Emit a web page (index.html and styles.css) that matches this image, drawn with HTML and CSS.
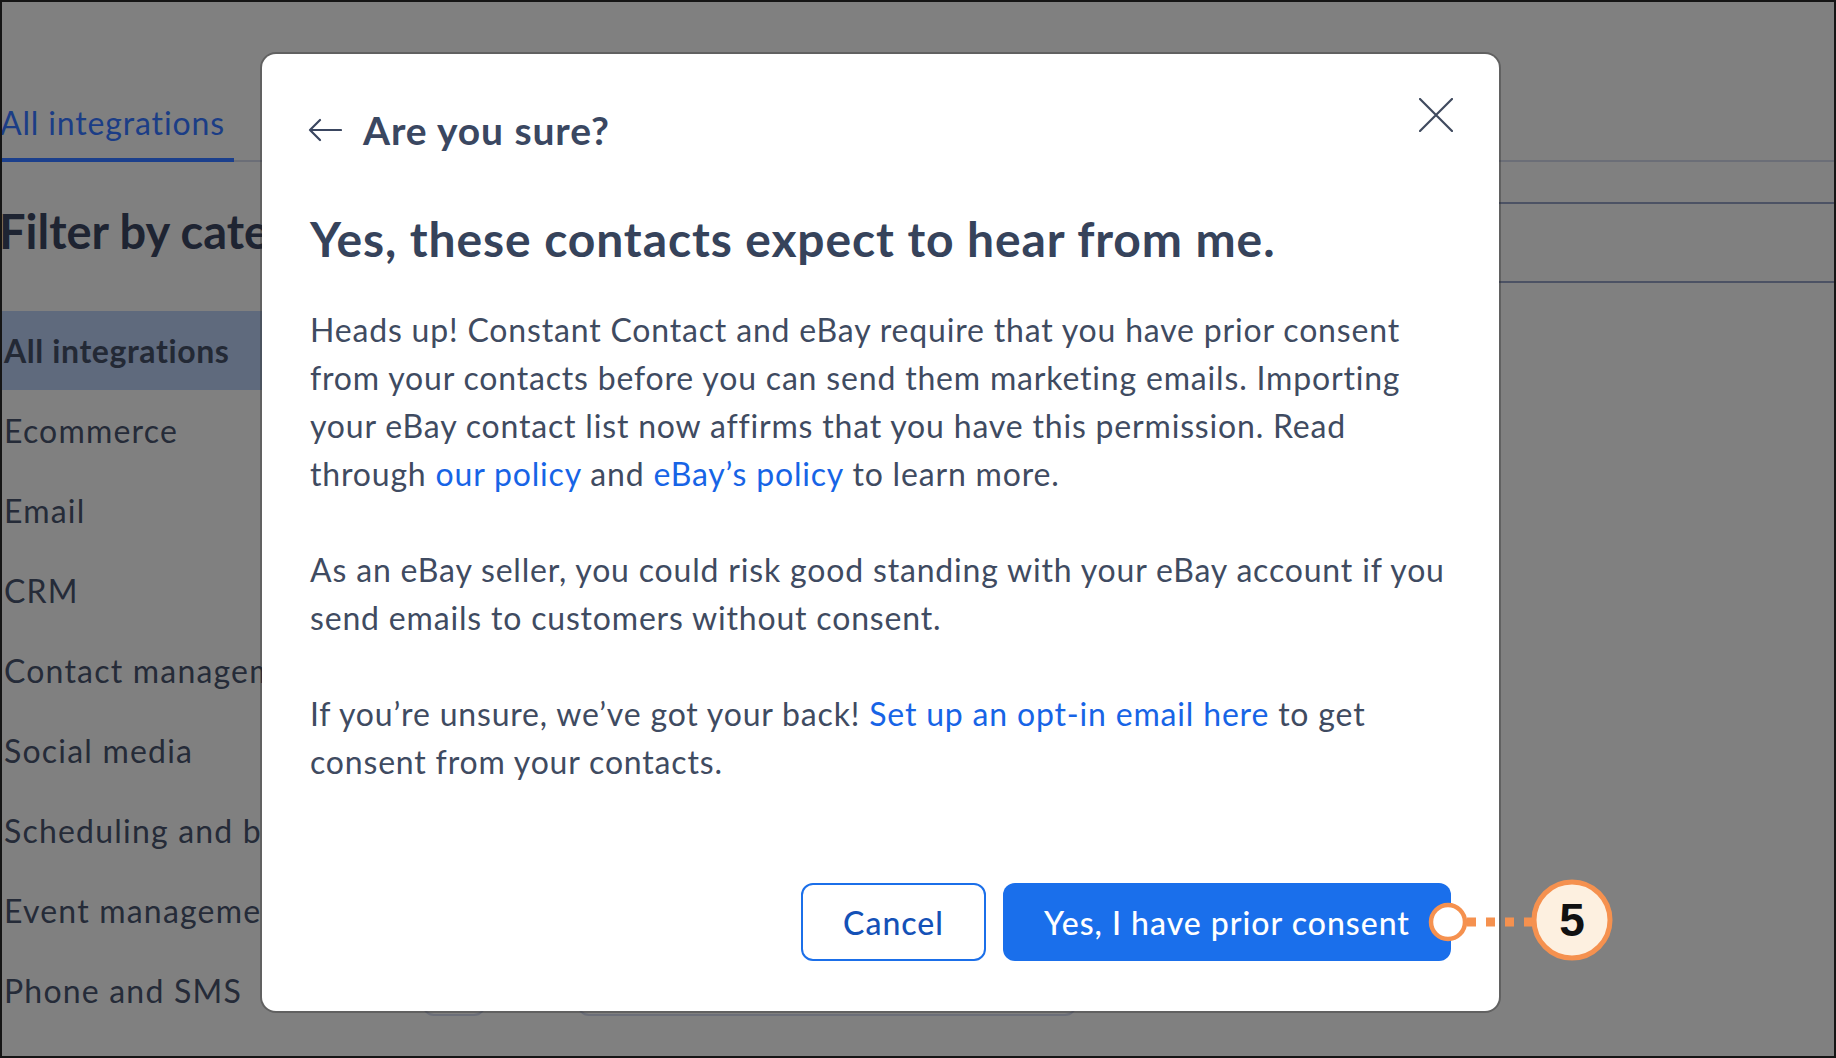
FILE: index.html
```html
<!DOCTYPE html>
<html lang="en">
<head>
<meta charset="utf-8">
<title>Are you sure?</title>
<link rel="stylesheet" href="styles.css">
</head>
<body>
<div class="frame">
  <div class="tabs">
    <div class="tab">All integrations</div>
  </div>
  <div class="layout">
    <aside class="sidebar">
      <h2 class="filter-title">Filter by category</h2>
      <ul class="cats">
        <li class="cat selected">All integrations</li>
        <li class="cat">Ecommerce</li>
        <li class="cat">Email</li>
        <li class="cat">CRM</li>
        <li class="cat">Contact management</li>
        <li class="cat">Social media</li>
        <li class="cat">Scheduling and booking</li>
        <li class="cat">Event management</li>
        <li class="cat">Phone and SMS</li>
      </ul>
    </aside>
    <main class="main">
      <div class="search"></div>
      <div class="card-row">
        <div class="chip"></div>
        <div class="card"></div>
      </div>
    </main>
  </div>

  <div class="modal" role="dialog">
    <div class="modal-head">
      <div class="head-left">
        <svg class="back" width="34" height="24" viewBox="0 0 34 24" fill="none" stroke="#3a4660" stroke-width="2.2" stroke-linecap="round" stroke-linejoin="round"><path d="M33 12H2M12 2L2 12l10 10"/></svg>
        <span class="head-title">Are you sure?</span>
      </div>
      <svg class="close" width="34" height="34" viewBox="0 0 34 34" fill="none" stroke="#3f4a5e" stroke-width="2.2" stroke-linecap="round"><path d="M1 1l32 32M33 1L1 33"/></svg>
    </div>
    <h1 class="modal-title">Yes, these contacts expect to hear from me.</h1>
    <p class="para">Heads up! Constant Contact and eBay require that you have prior consent<br>from your contacts before you can send them marketing emails. Importing<br>your eBay contact list now affirms that you have this permission. Read<br>through <a class="link">our policy</a> and <a class="link">eBay’s policy</a> to learn more.</p>
    <p class="para">As an eBay seller, you could risk good standing with your eBay account if you<br>send emails to customers without consent.</p>
    <p class="para">If you’re unsure, we’ve got your back! <a class="link">Set up an opt-in email here</a> to get<br>consent from your contacts.</p>
    <div class="actions">
      <button class="btn btn-cancel">Cancel</button>
      <button class="btn btn-primary">Yes, I have prior consent</button>
    </div>
  </div>

  <svg class="callout" width="200" height="100" viewBox="0 0 200 100">
    <line x1="38" y1="51" x2="106" y2="51" stroke="#f5914f" stroke-width="9" stroke-dasharray="9 10"/>
    <circle cx="19" cy="51" r="17" fill="#ffffff" stroke="#f5914f" stroke-width="4.5"/>
    <circle cx="143" cy="49" r="38" fill="#fdf0e0" stroke="#f5914f" stroke-width="5"/>
    <text x="143" y="65" text-anchor="middle" class="callout-num">5</text>
  </svg>
</div>
</body>
</html>
```

FILE: styles.css
```css
* { box-sizing: border-box; }

html, body {
  margin: 0;
  padding: 0;
}

body {
  font-family: "Lato", "Open Sans", sans-serif;
  background: #808080;
}

.frame {
  position: relative;
  width: 1836px;
  height: 1058px;
  border: 2px solid #151515;
  background: #808080;
  overflow: hidden;
  display: flex;
  flex-direction: column;
}

/* ---------- background page (dimmed) ---------- */
.tabs {
  height: 160px;
  border-bottom: 2px solid #6b6e77;
  display: flex;
  align-items: flex-end;
  flex: none;
}

.tab {
  width: 234px;
  height: 60px;
  margin-bottom: -2px;
  border-bottom: 4px solid #1b3f8c;
  color: #1b3d86;
  font-size: 32px;
  line-height: 32px;
  padding-top: 5px;
  margin-left: -2px;
  letter-spacing: 0.85px;
  white-space: nowrap;
}

.layout {
  flex: 1;
  display: grid;
  grid-template-columns: 260px 1fr;
}

.sidebar {
  padding-top: 41px;
  overflow: hidden;
}

.filter-title {
  margin: 0 0 52px -3px;
  font-size: 47px;
  line-height: 56px;
  font-weight: 700;
  color: #1e2432;
  white-space: nowrap;
}

.cats {
  list-style: none;
  margin: 0;
  padding: 0;
}

.cat {
  height: 80px;
  line-height: 80px;
  padding-left: 2px;
  font-size: 32px;
  color: #252b38;
  white-space: nowrap;
  letter-spacing: 1.2px;
}

.cat.selected {
  height: 79px;
  line-height: 79px;
  margin-bottom: 1px;
  background: #5f6a7d;
  font-weight: 700;
  letter-spacing: 0.6px;
  color: #232935;
}

.main {
  display: flex;
  flex-direction: column;
  padding-top: 40px;
  padding-bottom: 40px;
}

.search {
  height: 81px;
  border-top: 2px solid #4c5264;
  border-bottom: 2px solid #4c5264;
}

.card-row {
  margin-top: auto;
  display: flex;
  gap: 91px;
  padding-left: 160px;
}

.chip {
  width: 64px;
  height: 60px;
  border: 2px solid #6b6e78;
  border-radius: 12px;
}

.card {
  width: 500px;
  height: 60px;
  border: 2px solid #6b6e78;
  border-radius: 12px;
}

/* ---------- modal ---------- */
.modal {
  position: absolute;
  left: 260px;
  top: 52px;
  width: 1237px;
  height: 957px;
  background: #ffffff;
  border-radius: 14px;
  box-shadow: 0 0 0 2px rgba(40, 40, 40, 0.35);
  padding: 52px 48px 50px 48px;
  display: flex;
  flex-direction: column;
  color: #3e4a60;
}

.modal-head {
  display: flex;
  justify-content: space-between;
  align-items: flex-start;
}

.head-left {
  display: flex;
  align-items: center;
  gap: 21px;
  margin-left: -2px;
  height: 48px;
}

.back {
  display: block;
  flex: none;
}

.head-title {
  font-size: 39px;
  line-height: 48px;
  font-weight: 700;
  color: #3a4761;
  letter-spacing: 0.9px;
}

.close {
  display: block;
  margin-top: -8px;
  margin-right: -2px;
}

.modal-title {
  margin: 56px 0 0 0;
  font-size: 48px;
  line-height: 58px;
  font-weight: 700;
  color: #36435b;
  white-space: nowrap;
  letter-spacing: 0.9px;
}

.para {
  margin: 38px 0 0 0;
  font-size: 32px;
  line-height: 48px;
  color: #3f4b61;
  white-space: nowrap;
  letter-spacing: 0.82px;
}

.para + .para {
  margin-top: 48px;
}

.link {
  color: #1764e6;
  text-decoration: none;
}

.actions {
  margin-top: auto;
  display: flex;
  justify-content: flex-end;
  gap: 17px;
}

.btn {
  height: 78px;
  border-radius: 12px;
  font-family: "Lato", "Open Sans", sans-serif;
  font-size: 32px;
  font-weight: 500;
  cursor: pointer;
  padding: 0;
  letter-spacing: 1px;
}

.btn-cancel {
  width: 185px;
  background: #ffffff;
  border: 2px solid #1b6fe9;
  color: #1451b7;
}

.btn-primary {
  width: 448px;
  background: #1a6feb;
  border: none;
  color: #ffffff;
}

/* ---------- callout ---------- */
.callout {
  position: absolute;
  left: 1427px;
  top: 869px;
  overflow: visible;
}

.callout-num {
  font-family: "Liberation Sans", "Lato", sans-serif;
  font-weight: 700;
  font-size: 46px;
  fill: #111111;
}
```
